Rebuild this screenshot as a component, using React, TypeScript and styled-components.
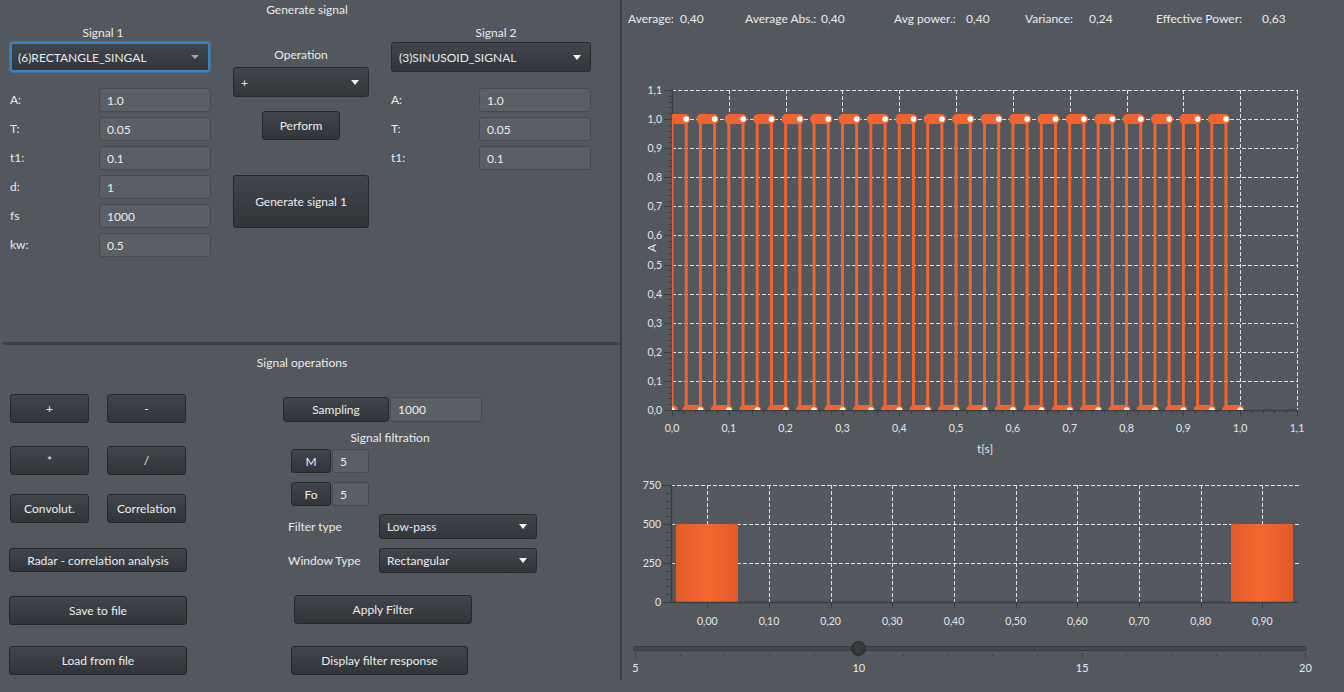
import React from 'react';
import styled, { createGlobalStyle } from 'styled-components';

const GlobalStyle = createGlobalStyle`
  html, body {
    margin: 0;
    padding: 0;
    background: #53585e;
  }
  body {
    font-family: Lato, "Liberation Sans", sans-serif;
    font-size: 12px;
    color: #e9eaeb;
  }
  * {
    box-sizing: border-box;
  }
`;

const Root = styled.div`
  display: flex;
  width: 1344px;
  height: 692px;
  overflow: hidden;
`;

const LeftPanel = styled.div`
  width: 622px;
  height: 680px;
  flex: none;
  display: flex;
  flex-direction: column;
  border-right: 2px solid #3b3f44;
`;

const TopSection = styled.div`
  height: 342px;
  flex: none;
`;

const Divider = styled.div`
  height: 3px;
  margin-left: 3px;
  background: #3d4146;
  flex: none;
`;

const BottomSection = styled.div`
  flex: 1;
`;

const SectionTitle = styled.div<{ $top?: number; $shift?: number }>`
  margin-top: ${p => p.$top ?? 0}px;
  padding-right: ${p => p.$shift ?? 0}px;
  line-height: 20px;
  text-align: center;
  white-space: nowrap;
`;

const TopGrid = styled.div`
  display: grid;
  grid-template-columns: 201px 136px 200px;
  column-gap: 22px;
  padding-left: 10px;
  align-items: start;
`;

const Column = styled.div`
  display: flex;
  flex-direction: column;
`;

const ColHeader = styled.div<{ $top: number; $shift?: number }>`
  margin-top: ${p => p.$top}px;
  line-height: 16px;
  text-align: center;
  padding-left: ${p => Math.max(0, p.$shift ?? 0)}px;
  padding-right: ${p => Math.max(0, -(p.$shift ?? 0))}px;
`;

const ComboBox = styled.div<{ $focused?: boolean; $h?: number; $w?: number; $top?: number }>`
  display: flex;
  align-items: center;
  height: ${p => p.$h ?? 30}px;
  width: ${p => (p.$w ? `${p.$w}px` : 'auto')};
  margin-top: ${p => p.$top ?? 0}px;
  padding: 0 9px 0 ${p => (p.$focused ? 6 : 7)}px;
  border: ${p => (p.$focused ? '2px solid #3384cc' : '1px solid #25282c')};
  border-radius: 3px;
  background: linear-gradient(#41464c, #32363b);
  box-shadow: ${p => (p.$focused ? '0 0 0 1px rgba(70, 150, 220, 0.35)' : 'none')};
  white-space: nowrap;
`;

const ComboText = styled.span`
  flex: 1;
`;

const Arrow = styled.span<{ $dim?: boolean }>`
  width: 0;
  height: 0;
  border-left: 4px solid transparent;
  border-right: 4px solid transparent;
  border-top: ${p => (p.$dim ? 4 : 5)}px solid ${p => (p.$dim ? '#a0a5aa' : '#f4f4f4')};
`;

const FieldGrid = styled.div<{ $label: number }>`
  display: grid;
  grid-template-columns: ${p => p.$label}px 112px;
  row-gap: 5px;
  margin-top: 16px;
  align-items: center;
`;

const FieldLabel = styled.span`
  line-height: 24px;
  white-space: nowrap;
`;

const Field = styled.input<{ $w?: number }>`
  width: ${p => (p.$w ? `${p.$w}px` : '100%')};
  height: 24px;
  padding: 0 0 0 7px;
  border: 1px solid #464a4f;
  border-radius: 3px;
  background: #5a5f66;
  color: #eceded;
  font: inherit;
  outline: none;
`;

const Button = styled.button<{ $w?: number; $h?: number; $top?: number; $left?: number }>`
  display: block;
  width: ${p => (p.$w ? `${p.$w}px` : '100%')};
  height: ${p => p.$h ?? 29}px;
  margin-top: ${p => p.$top ?? 0}px;
  margin-left: ${p => p.$left ?? 0}px;
  padding: 0;
  border: 1px solid #24272a;
  border-radius: 3px;
  background: linear-gradient(#41464c, #31353a);
  color: #eceded;
  font: inherit;
  white-space: nowrap;
  cursor: pointer;
`;

const CenterWrap = styled.div<{ $top: number }>`
  display: flex;
  justify-content: center;
  margin-top: ${p => p.$top}px;
`;

const OpsBody = styled.div`
  display: flex;
  align-items: flex-start;
`;

const LeftOps = styled.div`
  width: 178px;
  margin-left: 9px;
  flex: none;
`;

const PairGrid = styled.div<{ $top: number }>`
  display: grid;
  grid-template-columns: 79px 79px;
  column-gap: 18px;
  margin: ${p => p.$top}px 0 0 1px;
`;

const RightOps = styled.div`
  margin-left: 96px;
  width: 254px;
  flex: none;
`;

const InlineRow = styled.div<{ $top: number; $left?: number }>`
  display: flex;
  gap: 1px;
  margin-top: ${p => p.$top}px;
  margin-left: ${p => p.$left ?? 0}px;
`;

const SubTitle = styled.div<{ $top: number }>`
  width: 214px;
  margin-top: ${p => p.$top}px;
  line-height: 16px;
  text-align: center;
`;

const FilterRow = styled.div<{ $top: number }>`
  display: grid;
  grid-template-columns: 91px 158px;
  align-items: center;
  margin-top: ${p => p.$top}px;
  padding-left: 5px;
`;

const RightPanel = styled.div`
  flex: 1;
  height: 680px;
  display: flex;
  flex-direction: column;
`;

const StatsRow = styled.div`
  display: flex;
  align-items: center;
  height: 36px;
  padding-left: 6px;
  flex: none;
`;

const StatCell = styled.span<{ $w?: number }>`
  width: ${p => (p.$w ? `${p.$w}px` : 'auto')};
  flex: none;
  white-space: nowrap;
`;

const ChartSvg = styled.svg`
  display: block;
  flex: none;
  font-family: Lato, "Liberation Sans", sans-serif;
  font-size: 10.5px;
`;

const SliderBox = styled.div`
  position: relative;
  width: 674px;
  margin: 13.5px 0 0 11px;
`;

const Track = styled.div`
  height: 5px;
  border: 1px solid #383b3f;
  border-radius: 3px;
  background: #44484d;
`;

const Thumb = styled.div`
  position: absolute;
  left: 217.5px;
  top: -5px;
  width: 15px;
  height: 15px;
  border: 1px solid #25282b;
  border-radius: 50%;
  background: radial-gradient(circle at 50% 40%, #3c4045, #2c3034);
`;

const TickRow = styled.div`
  display: flex;
  justify-content: space-between;
  align-items: flex-start;
  width: 671px;
  margin: 2.5px 0 0 2px;
`;

const Tick = styled.span<{ $major?: boolean }>`
  width: 1px;
  height: ${p => (p.$major ? 5 : 3)}px;
  margin-top: ${p => (p.$major ? 0 : 1)}px;
  background: #3c4045;
`;

const TickLabels = styled.div`
  display: flex;
  justify-content: space-between;
  width: 671px;
  margin: 3px 0 0 2px;
  line-height: 14px;
  font-size: 11px;
`;

const TickLabel = styled.span`
  width: 1px;
  display: flex;
  justify-content: center;
  white-space: nowrap;
`;

const ORANGE = '#f2642f';
const GRID = '#dfe1e3';
const AXIS = '#3a3e43';
const TXT = '#e4e5e6';

const MX0 = 673;
const MX1 = 1298;
const MY0 = 410;
const MY1 = 90;
const mx = (t: number) => MX0 + (t / 1.1) * (MX1 - MX0);
const my = (v: number) => MY0 - (v / 1.1) * (MY0 - MY1);
const fmt1 = (n: number) => n.toFixed(1).replace('.', ',');

const range = (n: number) => Array.from({ length: n }, (_, i) => i);

function SignalChart() {
  const steps = range(11).map(i => (i + 1) / 10);
  return (
    <ChartSvg width={721} height={430} viewBox="623 36 721 430">
      <defs>
        <clipPath id="plotClip">
          <rect x={MX0} y={MY1 - 20} width={MX1 - MX0 + 2} height={MY0 - MY1 + 20} />
        </clipPath>
      </defs>
      {steps.map(v => (
        <line key={'h' + v} x1={MX0} x2={MX1} y1={Math.round(my(v)) + 0.5} y2={Math.round(my(v)) + 0.5} stroke={GRID} strokeDasharray="4 2" />
      ))}
      {steps.map(t => (
        <line key={'v' + t} x1={Math.round(mx(t)) + 0.5} x2={Math.round(mx(t)) + 0.5} y1={MY1} y2={MY0} stroke={GRID} strokeDasharray="4 2" />
      ))}
      <line x1={MX0 + 0.5} x2={MX0 + 0.5} y1={MY1} y2={MY0} stroke={AXIS} strokeWidth={1.5} />
      <line x1={MX0} x2={MX1 + 1} y1={MY0 + 0.5} y2={MY0 + 0.5} stroke={AXIS} strokeWidth={1.5} />
      {range(56).map(i => {
        const len = i % 5 === 0 ? 8 : 4;
        const y = Math.round(my(i * 0.02)) + 0.5;
        return <line key={'yt' + i} x1={MX0 - len} x2={MX0} y1={y} y2={y} stroke={AXIS} />;
      })}
      {range(56).map(i => {
        const len = i % 5 === 0 ? 7 : 4;
        const x = Math.round(mx(i * 0.02)) + 0.5;
        return <line key={'xt' + i} x1={x} x2={x} y1={MY0} y2={MY0 + len} stroke={AXIS} />;
      })}
      {range(12).map(i => (
        <text key={'yl' + i} x={663} y={my(i / 10) + 4} textAnchor="end" fill={TXT}>{fmt1(i / 10)}</text>
      ))}
      {range(12).map(i => (
        <text key={'xl' + i} x={mx(i / 10)} y={432} textAnchor="middle" fill={TXT}>{fmt1(i / 10)}</text>
      ))}
      <text x={986} y={453} textAnchor="middle" fill={TXT} fontSize={12}>t[s]</text>
      <text x={657} y={248} textAnchor="middle" fill={TXT} fontSize={12} transform="rotate(-90 657 248)">A</text>

      <g clipPath="url(#plotClip)">
        <rect x={MX0 - 6} y={MY0 - 5} width={12} height={10} rx={5} fill={ORANGE} />
        {range(20).map(k => {
          const r = mx(k * 0.05);
          const f = mx(k * 0.05 + 0.025);
          const n = mx((k + 1) * 0.05);
          return (
            <g key={'p' + k}>
              <line x1={r} x2={r} y1={my(1)} y2={MY0} stroke={ORANGE} strokeWidth={3} />
              <line x1={f} x2={f} y1={my(1)} y2={MY0} stroke={ORANGE} strokeWidth={3} />
              <rect x={r - 4} y={my(1) - 5} width={f - r + 8} height={10} rx={5} fill={ORANGE} />
              <rect x={f - 4} y={MY0 - 5} width={n - f + 8} height={10} rx={5} fill={ORANGE} />
            </g>
          );
        })}
        <circle cx={MX0} cy={MY0} r={2.8} fill="#fff" />
        {range(20).map(k => (
          <g key={'d' + k}>
            <circle cx={mx(k * 0.05 + 0.025)} cy={my(1)} r={2.8} fill="#fff" />
            <circle cx={mx((k + 1) * 0.05)} cy={MY0} r={2.8} fill="#fff" />
          </g>
        ))}
      </g>
    </ChartSvg>
  );
}

const BX0 = 672;
const BX1 = 1299;
const BY0 = 602;
const BY1 = 485;
const by = (v: number) => BY0 - (v / 750) * (BY0 - BY1);
const bc = (i: number) => 708.3 + i * 61.67;

const bins = [500, 0, 0, 0, 0, 0, 0, 0, 0, 500];

function HistogramChart() {
  return (
    <ChartSvg width={721} height={166} viewBox="623 466 721 166">
      <defs>
        <linearGradient id="barFill" x1="0" x2="1" y1="0" y2="0">
          <stop offset="0" stopColor="#e35b2b" />
          <stop offset="0.5" stopColor="#f4672f" />
          <stop offset="1" stopColor="#e2592a" />
        </linearGradient>
      </defs>
      {[250, 500, 750].map(v => (
        <line key={'h' + v} x1={BX0} x2={BX1 + 1} y1={Math.round(by(v)) + 0.5} y2={Math.round(by(v)) + 0.5} stroke={GRID} strokeDasharray="4 2" />
      ))}
      {range(10).map(i => (
        <line key={'v' + i} x1={Math.round(bc(i)) + 0.5} x2={Math.round(bc(i)) + 0.5} y1={BY1} y2={BY0} stroke={GRID} strokeDasharray="4 2" />
      ))}
      {bins.map((v, i) =>
        v > 0 ? (
          <rect key={'b' + i} x={Math.round(bc(i) - 31.3)} y={by(v)} width={62} height={BY0 - by(v)} fill="url(#barFill)" />
        ) : null
      )}
      <line x1={BX0 + 0.5} x2={BX0 + 0.5} y1={BY1} y2={BY0} stroke={AXIS} strokeWidth={1.5} />
      <line x1={BX0} x2={BX1} y1={BY0 + 0.5} y2={BY0 + 0.5} stroke={AXIS} strokeWidth={1.5} />
      {range(16).map(i => {
        const len = i % 5 === 0 ? 9 : 5;
        const y = Math.round(by(i * 50)) + 0.5;
        return <line key={'yt' + i} x1={BX0 - len} x2={BX0} y1={y} y2={y} stroke={AXIS} />;
      })}
      {range(10).map(i => (
        <line key={'xt' + i} x1={Math.round(bc(i)) + 0.5} x2={Math.round(bc(i)) + 0.5} y1={BY0} y2={BY0 + 7} stroke={AXIS} />
      ))}
      {[0, 250, 500, 750].map(v => (
        <text key={'yl' + v} x={662} y={by(v) + 4} textAnchor="end" fill={TXT}>{v}</text>
      ))}
      {range(10).map(i => (
        <text key={'xl' + i} x={bc(i)} y={625} textAnchor="middle" fill={TXT}>{`0,${i}0`}</text>
      ))}
    </ChartSvg>
  );
}

const signal1Fields: [string, string][] = [
  ['A:', '1.0'],
  ['T:', '0.05'],
  ['t1:', '0.1'],
  ['d:', '1'],
  ['fs', '1000'],
  ['kw:', '0.5'],
];

const signal2Fields: [string, string][] = [
  ['A:', '1.0'],
  ['T:', '0.05'],
  ['t1:', '0.1'],
];

const stats: [string, number, string, number][] = [
  ['Average:', 52, '0,40', 65],
  ['Average Abs.:', 76, '0,40', 73],
  ['Avg power.:', 72, '0,40', 59],
  ['Variance:', 64, '0,24', 67],
  ['Effective Power:', 106, '0,63', 0],
];

const App: React.FC = () => {
  return (
    <>
      <GlobalStyle />
      <Root>
        <LeftPanel>
          <TopSection>
            <SectionTitle $shift={6}>Generate signal</SectionTitle>
            <TopGrid>
              <Column>
                <ColHeader $top={5} $shift={-15}>Signal 1</ColHeader>
                <ComboBox $focused $top={1} $w={200}>
                  <ComboText>(6)RECTANGLE_SINGAL</ComboText>
                  <Arrow $dim />
                </ComboBox>
                <FieldGrid $label={89}>
                  {signal1Fields.map(([label, value]) => (
                    <React.Fragment key={label}>
                      <FieldLabel>{label}</FieldLabel>
                      <Field readOnly value={value} />
                    </React.Fragment>
                  ))}
                </FieldGrid>
              </Column>

              <Column>
                <ColHeader $top={27}>Operation</ColHeader>
                <ComboBox $top={4}>
                  <ComboText>+</ComboText>
                  <Arrow />
                </ComboBox>
                <CenterWrap $top={14}>
                  <Button $w={78}>Perform</Button>
                </CenterWrap>
                <Button $top={35} $h={53}>Generate signal 1</Button>
              </Column>

              <Column>
                <ColHeader $top={5} $shift={10}>Signal 2</ColHeader>
                <ComboBox $top={1}>
                  <ComboText>(3)SINUSOID_SIGNAL</ComboText>
                  <Arrow />
                </ComboBox>
                <FieldGrid $label={88}>
                  {signal2Fields.map(([label, value]) => (
                    <React.Fragment key={label}>
                      <FieldLabel>{label}</FieldLabel>
                      <Field readOnly value={value} />
                    </React.Fragment>
                  ))}
                </FieldGrid>
              </Column>
            </TopGrid>
          </TopSection>

          <Divider />

          <BottomSection>
            <SectionTitle $top={8} $shift={16}>Signal operations</SectionTitle>
            <OpsBody>
              <LeftOps>
                <PairGrid $top={21}>
                  <Button>+</Button>
                  <Button>-</Button>
                </PairGrid>
                <PairGrid $top={23}>
                  <Button>*</Button>
                  <Button>/</Button>
                </PairGrid>
                <PairGrid $top={19}>
                  <Button>Convolut.</Button>
                  <Button>Correlation</Button>
                </PairGrid>
                <Button $top={25} $h={24}>Radar - correlation analysis</Button>
                <Button $top={24}>Save to file</Button>
                <Button $top={21}>Load from file</Button>
              </LeftOps>

              <RightOps>
                <InlineRow $top={24}>
                  <Button $w={106} $h={25}>Sampling</Button>
                  <Field readOnly value="1000" $w={92} style={{ height: 25 }} />
                </InlineRow>
                <SubTitle $top={8}>Signal filtration</SubTitle>
                <InlineRow $top={3} $left={8}>
                  <Button $w={40} $h={24}>M</Button>
                  <Field readOnly value="5" $w={37} />
                </InlineRow>
                <InlineRow $top={9} $left={8}>
                  <Button $w={40} $h={24}>Fo</Button>
                  <Field readOnly value="5" $w={37} />
                </InlineRow>
                <FilterRow $top={8}>
                  <FieldLabel>Filter type</FieldLabel>
                  <ComboBox $h={25}>
                    <ComboText>Low-pass</ComboText>
                    <Arrow />
                  </ComboBox>
                </FilterRow>
                <FilterRow $top={9}>
                  <FieldLabel>Window Type</FieldLabel>
                  <ComboBox $h={25}>
                    <ComboText>Rectangular</ComboText>
                    <Arrow />
                  </ComboBox>
                </FilterRow>
                <Button $top={22} $left={11} $w={178}>Apply Filter</Button>
                <Button $top={22} $left={8} $w={177}>Display filter response</Button>
              </RightOps>
            </OpsBody>
          </BottomSection>
        </LeftPanel>

        <RightPanel>
          <StatsRow>
            {stats.map(([label, lw, value, vw]) => (
              <React.Fragment key={label}>
                <StatCell $w={lw}>{label}</StatCell>
                <StatCell $w={vw || undefined}>{value}</StatCell>
              </React.Fragment>
            ))}
          </StatsRow>
          <SignalChart />
          <HistogramChart />
          <SliderBox>
            <Track />
            <Thumb />
            <TickRow>
              {range(16).map(i => (
                <Tick key={i} $major={i % 5 === 0} />
              ))}
            </TickRow>
            <TickLabels>
              {['5', '10', '15', '20'].map(l => (
                <TickLabel key={l}>{l}</TickLabel>
              ))}
            </TickLabels>
          </SliderBox>
        </RightPanel>
      </Root>
    </>
  );
};

export default App;
